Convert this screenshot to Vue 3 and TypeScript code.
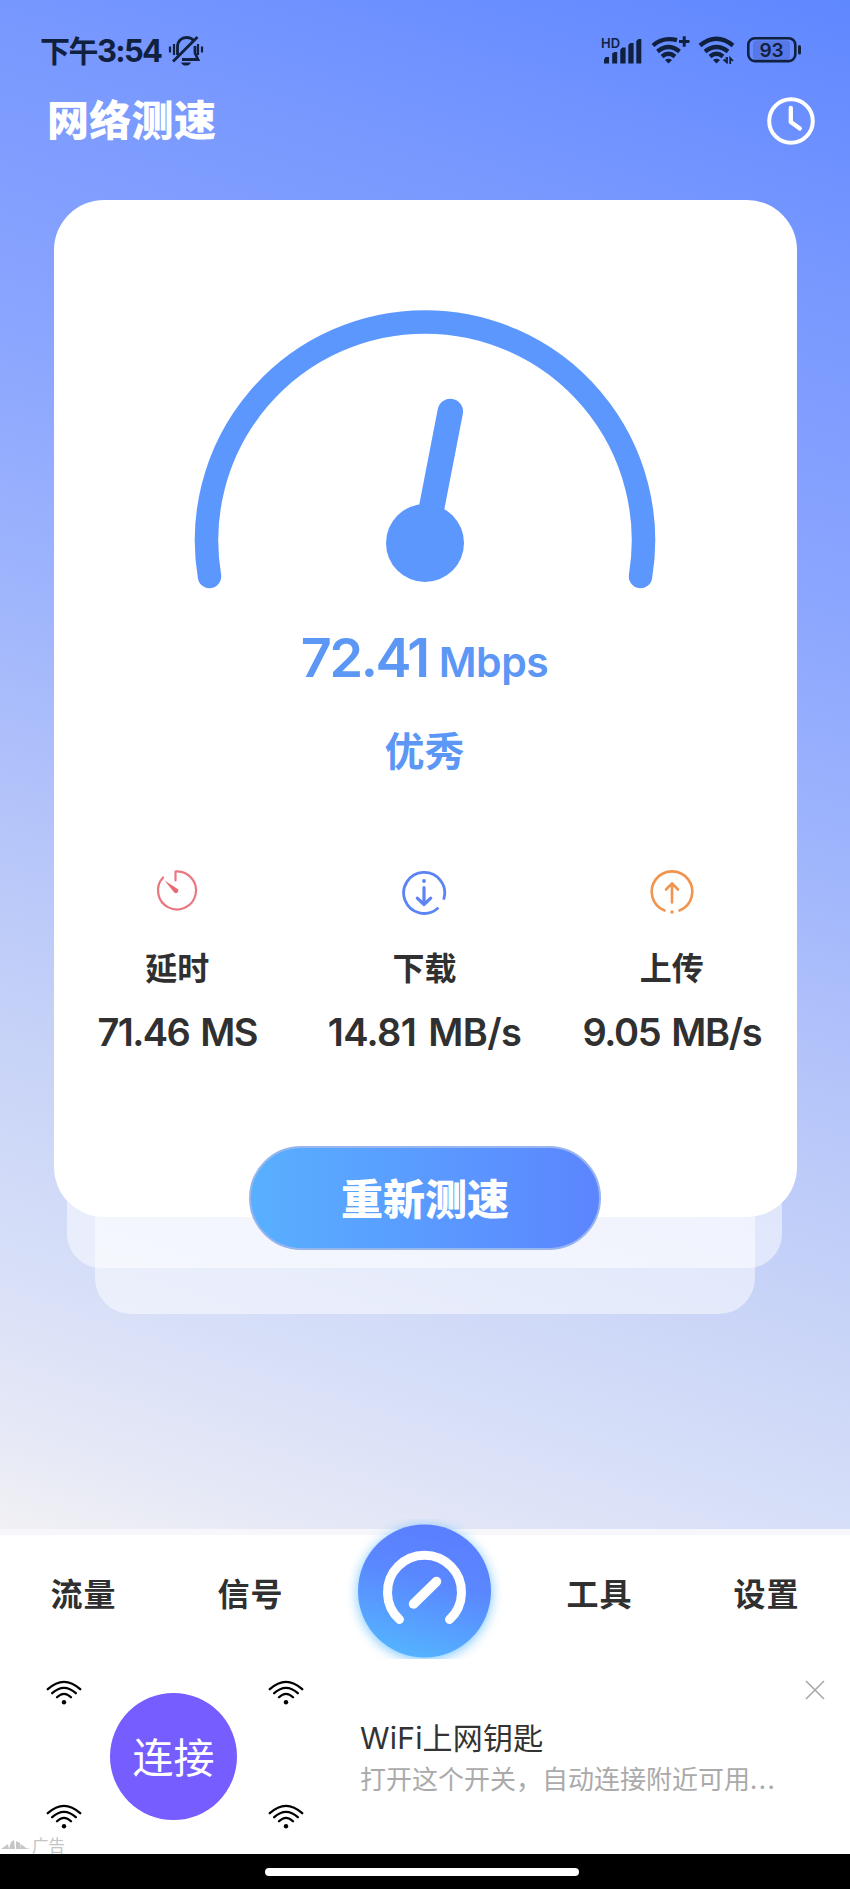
<script setup lang="ts">
interface Stat {
  kind: 'latency' | 'download' | 'upload'
  label: string
  value: string
}

const stats: Stat[] = [
  { kind: 'latency', label: '延时', value: '71.46 MS' },
  { kind: 'download', label: '下载', value: '14.81 MB/s' },
  { kind: 'upload', label: '上传', value: '9.05 MB/s' },
]

const leftTabs: string[] = ['流量', '信号']
const rightTabs: string[] = ['工具', '设置']
</script>

<template>
  <div class="screen">
    <main class="page">
      <div class="status">
        <div class="status-left">
          <span class="time">下午<span class="digits">3:54</span></span>
          <svg class="bell" width="36" height="32" viewBox="0 0 36 32" fill="none" stroke="currentColor" stroke-width="2.8">
            <path d="M2 11.500v6M6 9v11M30 9v11M34 11.500v6" stroke-width="2.200" />
            <path d="M9.500 20v-8c0-6 4-9.500 9-9.500 3 0 5.500 1 7 3" />
            <path d="M27 11v7l3 6.500H14" />
            <path d="M29.500 2L5 26.500" />
            <path d="M13 27.500h10c-1 2.500-3 3-5 3s-4-.5-5-3z" fill="currentColor" stroke="none" />
          </svg>
        </div>
        <div class="status-right">
          <svg width="42" height="30" viewBox="0 0 42 30" fill="currentColor">
            <text class="hd" x="0" y="12.500" textLength="19" lengthAdjust="spacingAndGlyphs">HD</text>
            <path d="M3 28.500v-4l1.500-2.500H8v6.500zM11.200 28.500V18.500l2-1.500h3v11.500zM19.300 28.500v-14l2-2h3.300v16zM27.300 28.500V10l2-2h3.300v20.500zM35.300 28.500V6l2-2h3v24.500z" />
          </svg>
          <svg width="42" height="30" viewBox="0 0 42 30" fill="none" stroke="currentColor" stroke-width="4.300">
            <path d="M2 10.500Q12 1.500 26 5.200" />
            <path d="M6.500 16.500Q17.500 7.500 28.500 16.500" />
            <path d="M11 21.500Q17.500 16 24 21.500" />
            <path d="M14 25Q17.500 22.500 21 25L17.500 28.500z" fill="currentColor" stroke="none" />
            <path d="M28 6.500h10.500M33.200 1.200v10.500" stroke-width="3" />
          </svg>
          <svg width="40" height="30" viewBox="0 0 40 30" fill="none" stroke="currentColor" stroke-width="4.300">
            <path d="M2 10.500Q18.500-3 35 10.500" />
            <path d="M7 16.500Q18.500 7.500 30 16.500" />
            <path d="M12 21.500Q18.500 16 25 21.500" />
            <path d="M15 25Q18.500 22.500 22 25L18.500 28.500z" fill="currentColor" stroke="none" />
            <path d="M25.500 24.500l3 2.500v-5M29 22v6.500M32.200 29v-6l2.800 3" stroke-width="1.800" />
          </svg>
          <svg width="56" height="30" viewBox="0 0 56 30" fill="none" stroke="currentColor">
            <rect x="6" y="5.500" width="37" height="19" rx="3" fill="#5878e8" stroke="none" />
            <rect x="1.300" y="3.300" width="47" height="22.800" rx="6.500" stroke-width="2.600" />
            <path d="M52.500 11.500v6.500" stroke-width="3" stroke-linecap="round" />
            <text class="battery" x="24.500" y="21.500" text-anchor="middle">93</text>
          </svg>
        </div>
      </div>

      <header class="header">
        <h1>网络测速</h1>
        <svg width="48" height="48" viewBox="0 0 48 48" fill="none" stroke="#fff" stroke-linecap="round" stroke-linejoin="round">
          <circle cx="24" cy="24" r="21.800" stroke-width="4" />
          <path d="M23.800 11v14l9 6.500" stroke-width="4.300" />
        </svg>
      </header>

      <div class="stack">
        <section class="card">
          <svg class="gauge" width="464" height="290" viewBox="0 0 464 290" fill="none" stroke="#5c97fe" stroke-linecap="round">
            <path d="M16.500 266.500A218.500 218.500 0 1 1 447.500 266.500" stroke-width="23.500" />
            <path d="M232 232L257.300 101.500" stroke-width="25.500" />
            <circle cx="232" cy="233" r="39" fill="#5c97fe" stroke="none" />
          </svg>
          <div class="speed"><span class="speed-value">72.41</span><span class="speed-unit">Mbps</span></div>
          <div class="grade">优秀</div>
          <div class="stats">
            <div v-for="s in stats" :key="s.kind" class="stat">
              <svg v-if="s.kind === 'latency'" width="48" height="48" viewBox="0 0 48 48" fill="none" stroke="#ea7680" stroke-width="2.200">
                <path d="M22.500 12.500V3.500A19 19 0 1 1 10.100 9.500" stroke-linejoin="round" stroke-linecap="round" />
                <path d="M11.500 12.500L25 21.200a2.600 2.600 0 0 1-3.500 3.600z" fill="#ea6873" stroke="none" />
              </svg>
              <svg v-else-if="s.kind === 'download'" width="48" height="48" viewBox="0 0 48 48" fill="none" stroke="#5c84f3" stroke-width="2.800" stroke-linecap="round">
                <path d="M37.500 40.500A20.500 20.500 0 1 1 43.900 30.500" />
                <path d="M24 19.500v17M17.300 30.200l6.700 6.300 6.700-6.300" stroke-width="3.200" stroke-linejoin="round" />
                <circle cx="24" cy="13" r="1.900" fill="#5c84f3" stroke="none" />
              </svg>
              <svg v-else width="48" height="48" viewBox="0 0 48 48" fill="none" stroke="#f1944e" stroke-width="2.600" stroke-linecap="round">
                <path d="M16.500 42.500A20.300 20.300 0 1 1 31.500 42.500" />
                <path d="M24 34.500V15.500M18 21.500l6-6.200 6 6.200" stroke-linejoin="round" />
                <circle cx="24" cy="44" r="1.700" fill="#f1944e" stroke="none" />
              </svg>
              <span class="stat-label">{{ s.label }}</span>
              <span class="stat-value" :class="s.kind">{{ s.value }}</span>
            </div>
          </div>
        </section>
        <div class="sheet sheet-mid"></div>
        <div class="sheet sheet-low"></div>
        <button class="retry" type="button">重新测速</button>
      </div>
    </main>

    <nav class="tabs">
      <span v-for="t in leftTabs" :key="t" class="tab">{{ t }}</span>
      <div class="tab-main">
        <svg width="200" height="140" viewBox="0 0 200 140" fill="none">
          <defs>
            <linearGradient id="disc" x1="0.600" y1="0.100" x2="0.350" y2="1">
              <stop offset="0" stop-color="#5b80ff" />
              <stop offset="0.350" stop-color="#5a88ff" />
              <stop offset="1" stop-color="#54b4ff" />
            </linearGradient>
            <filter id="glow" x="-30%" y="-30%" width="160%" height="160%">
              <feGaussianBlur stdDeviation="6" />
            </filter>
          </defs>
          <circle cx="99.500" cy="74" r="67" fill="#58b8ff" opacity="0.750" filter="url(#glow)" />
          <circle cx="99.500" cy="72" r="66.500" fill="url(#disc)" />
          <g stroke="#fff" stroke-linecap="round">
            <path d="M74.500 100.500A37 37 0 1 1 124.500 100.500" stroke-width="9" />
            <path d="M88.500 85L111.500 62.500" stroke-width="9.500" />
          </g>
        </svg>
      </div>
      <span v-for="t in rightTabs" :key="t" class="tab">{{ t }}</span>
    </nav>

    <aside class="ad">
      <div class="ad-art">
        <svg v-for="n in 4" :key="n" class="wifi" width="36" height="26" viewBox="0 0 36 26" fill="none" stroke="#000" stroke-width="2.300" stroke-linecap="round">
          <path d="M1.800 9.200Q18-5.500 34.200 9.200M6.200 13.200Q18 2.500 29.800 13.200M11 17.300Q18 10.500 25 17.300" />
          <circle cx="18" cy="22.300" r="2.200" fill="#000" stroke="none" />
        </svg>
        <div class="connect">连接</div>
      </div>
      <div class="ad-copy">
        <div class="ad-title"><span class="latin">WiFi</span>上网钥匙</div>
        <div class="ad-text">打开这个开关，自动连接附近可用<span class="dots">...</span></div>
      </div>
      <svg class="close" width="20" height="20" viewBox="0 0 20 20" stroke="#a8a8a8" stroke-width="1.600">
        <path d="M1 1l18 18M19 1L1 19" />
      </svg>
      <div class="ad-tag">
        <svg width="30" height="12" viewBox="0 0 30 12" fill="#c6c6c6">
          <path d="M0 10L7 5l1 5zM8 10l2-7 3-2 1 9zM15 10V2l4 2 1 6zM20 10V5l5 4 4 1z" />
        </svg>
        广告
      </div>
    </aside>

    <footer class="home"><span class="pill"></span></footer>
  </div>
</template>

<style>
body {
  margin: 0;
}
</style>

<style scoped>
.screen {
  width: 850px;
  height: 1889px;
  overflow: hidden;
  display: flex;
  flex-direction: column;
  background: #fff;
  font-family: "Noto Sans CJK SC", sans-serif;
}
.page {
  height: 1529px;
  flex: none;
  background: linear-gradient(198deg, #5f87ff 0%, #7898ff 16%, #8ba6fe 34%, #9fb5fc 48%, #b4c4fa 60%, #c7d3f7 73%, #d7dff8 85%, #e5e8f6 94%, #f1f1f4 100%);
}
.status {
  height: 80px;
  display: flex;
  justify-content: space-between;
  padding: 0 47px 0 40px;
  color: #10203f;
}
.status-left,
.status-right {
  display: flex;
}
.time {
  font-weight: 700;
  font-size: 30px;
  line-height: 40px;
  margin-top: 29px;
  width: 128px;
  letter-spacing: -1.500px;
  white-space: nowrap;
}
.digits {
  font-family: Inter, sans-serif;
  font-size: 31px;
  letter-spacing: -1.700px;
}
.bell {
  margin-top: 35px;
}
.status-right svg {
  margin-top: 35px;
}
.status-right svg:nth-child(2) {
  margin-left: 8px;
}
.status-right svg:nth-child(3) {
  margin-left: 5px;
}
.status-right svg:nth-child(4) {
  margin-left: 9px;
}
.hd {
  font: 600 13px Inter, sans-serif;
}
.battery {
  font: 600 19px Inter, sans-serif;
  fill: currentColor;
  stroke: none;
}
.header {
  height: 120px;
  box-sizing: border-box;
  display: flex;
  justify-content: space-between;
  padding: 17px 35px 0 47px;
}
.header h1 {
  margin: -2px 0 0;
  font-size: 42px;
  line-height: 46px;
  height: 46px;
  font-weight: 900;
  letter-spacing: 0.300px;
  color: #fff;
}
.stack {
  position: relative;
  height: 1114px;
  display: flex;
  flex-direction: column;
  align-items: center;
}
.card {
  width: 743px;
  height: 1017px;
  box-sizing: border-box;
  border-radius: 50px;
  background: #fff;
  display: flex;
  flex-direction: column;
  align-items: center;
  padding: 110px 1px 0 0;
  position: relative;
  z-index: 2;
}
.gauge {
  flex: none;
}
.sheet {
  position: absolute;
  background: rgba(255, 255, 255, 0.500);
}
.sheet-mid {
  left: 67px;
  right: 68px;
  top: 900px;
  height: 168px;
  border-radius: 34px;
}
.sheet-low {
  left: 95px;
  right: 95px;
  top: 900px;
  height: 214px;
  border-radius: 36px;
}
.speed {
  display: flex;
  align-items: baseline;
  height: 80px;
  line-height: 80px;
  margin-top: 18px;
  color: #5c97f6;
  font-family: Inter, sans-serif;
  font-weight: 600;
  white-space: nowrap;
}
.speed-value {
  font-size: 54px;
  letter-spacing: -2.400px;
}
.speed-unit {
  font-size: 41px;
  letter-spacing: -0.500px;
  margin-left: 11px;
}
.grade {
  font-size: 40px;
  line-height: 50px;
  margin-top: 26px;
  font-weight: 700;
  color: #5c97f6;
}
.stats {
  width: 742px;
  display: grid;
  grid-template-columns: 1fr 1fr 1fr;
  margin-top: 94px;
}
.stat {
  display: flex;
  flex-direction: column;
  align-items: center;
}
.stat-label {
  font-size: 32px;
  line-height: 40px;
  margin-top: 30px;
  font-weight: 700;
  color: #303030;
}
.stat-value {
  font-family: Inter, sans-serif;
  font-size: 38px;
  line-height: 50px;
  margin-top: 21px;
  font-weight: 600;
  letter-spacing: -1.600px;
  word-spacing: 3px;
  color: #303030;
  white-space: nowrap;
}
.stat-value.download {
  letter-spacing: -0.600px;
}
.stat-value.upload {
  letter-spacing: -1.400px;
}
.retry {
  position: absolute;
  z-index: 3;
  left: 249px;
  top: 946px;
  width: 352px;
  height: 104px;
  border: 2px solid #98b5ee;
  border-radius: 52px;
  background: linear-gradient(90deg, #58b0ff, #5c85ff);
  color: #fff;
  font-family: inherit;
  font-size: 42px;
  font-weight: 900;
  line-height: 50px;
  padding: 0 0 2px;
}
.tabs {
  height: 130px;
  flex: none;
  box-sizing: border-box;
  border-top: 6px solid #f6f6fb;
  background: #fff;
  display: flex;
}
.tab {
  width: 167px;
  text-align: center;
  font-size: 32px;
  letter-spacing: 1px;
  font-weight: 700;
  color: #303030;
  line-height: 40px;
  padding-top: 37px;
}
.tab-main {
  width: 182px;
  display: flex;
  justify-content: center;
  margin-top: -16px;
}
.tab-main svg {
  flex: none;
}
.ad {
  height: 195px;
  flex: none;
  display: flex;
  position: relative;
  background: #fff;
}
.ad-art {
  width: 258px;
  height: 150px;
  margin: 21px 56px 0 46px;
  display: grid;
  grid-template-columns: 36px 36px;
  justify-content: space-between;
  align-content: space-between;
  position: relative;
}
.connect {
  position: absolute;
  left: 64px;
  top: 13px;
  width: 127px;
  height: 127px;
  border-radius: 50%;
  background: #755dff;
  color: #fff;
  font-size: 41px;
  font-weight: 400;
  line-height: 124px;
  text-align: center;
}
.ad-copy {
  padding-top: 56px;
  white-space: nowrap;
}
.ad-title {
  font-size: 30px;
  line-height: 43px;
  letter-spacing: 0.200px;
  color: #333;
}
.latin {
  font-family: Inter, sans-serif;
  font-size: 30px;
}
.ad-text {
  font-size: 26px;
  line-height: 40px;
  margin-top: -2px;
  color: #aaa;
}
.dots {
  letter-spacing: 1.500px;
}
.close {
  position: absolute;
  left: 805px;
  top: 21px;
}
.ad-tag {
  position: absolute;
  left: 1px;
  bottom: -1px;
  display: flex;
  align-items: center;
  gap: 1px;
  font-size: 16.500px;
  line-height: 20px;
  color: #c4c4c4;
}
.home {
  flex: 1;
  background: #000;
  display: flex;
  justify-content: center;
  padding-top: 14px;
}
.pill {
  width: 314px;
  height: 8px;
  border-radius: 5px;
  background: #fff;
  margin-right: 6px;
}
</style>
